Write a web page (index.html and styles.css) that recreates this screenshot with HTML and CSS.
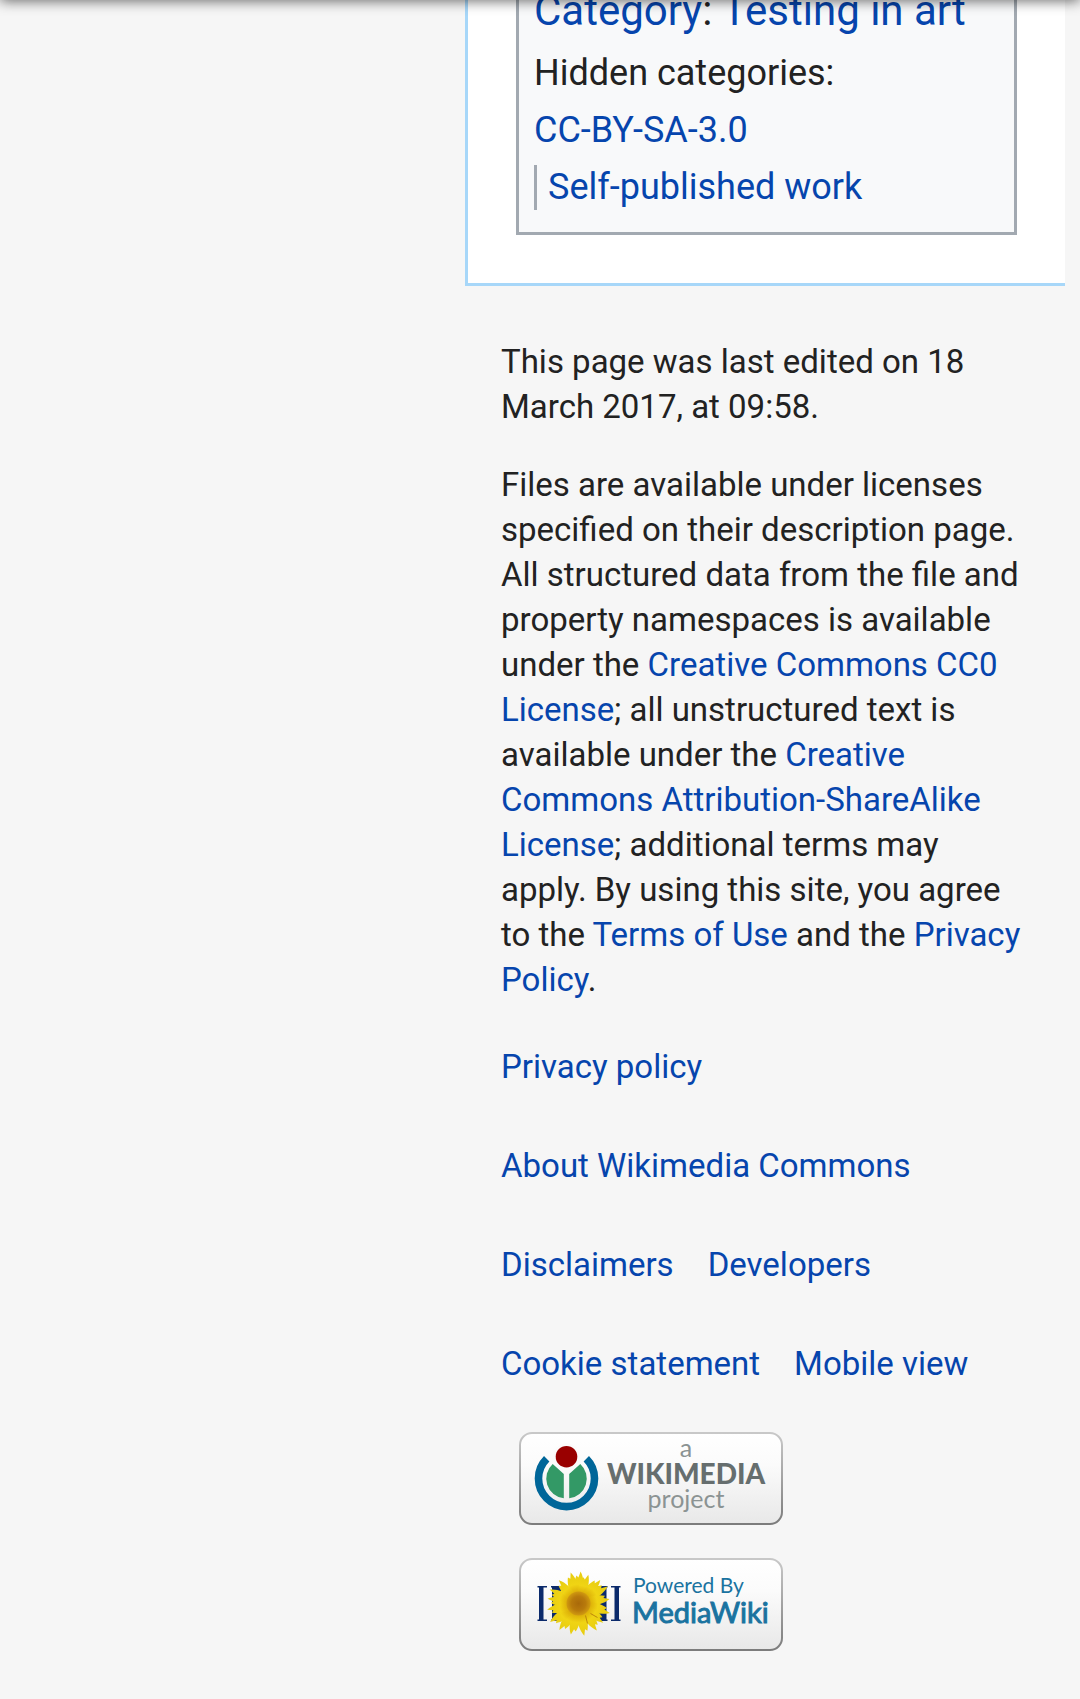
FILE: index.html
```html
<!DOCTYPE html>
<html lang="en">
<head>
<meta charset="utf-8">
<meta name="viewport" content="width=device-width, initial-scale=1">
<title>Testing in art - Wikimedia Commons</title>
<link rel="stylesheet" href="styles.css">
</head>
<body>
<div class="top-shadow"></div>
<main class="content">
  <div class="catlinks">
    <div class="cat-normal"><a href="#">Category</a>: <a href="#">Testing in art</a></div>
    <div class="cat-hidden">Hidden categories:
      <ul>
        <li><a href="#">CC-BY-SA-3.0</a></li>
        <li><a href="#">Self-published work</a></li>
      </ul>
    </div>
  </div>
</main>
<footer class="footer">
  <p>This page was last edited on 18 March 2017, at 09:58.</p>
  <p>Files are available under licenses specified on their description page. All structured data from the file and property namespaces is available under the <a href="#">Creative Commons CC0 License</a>; all unstructured text is available under the <a href="#">Creative Commons Attribution-ShareAlike License</a>; additional terms may apply. By using this site, you agree to the <a href="#">Terms of Use</a> and the <a href="#">Privacy Policy</a>.</p>
  <ul class="places">
    <li><a href="#">Privacy policy</a></li>
    <li><a href="#">About Wikimedia Commons</a></li>
    <li><a href="#">Disclaimers</a></li>
    <li><a href="#">Developers</a></li>
    <li><a href="#">Cookie statement</a></li>
    <li><a href="#">Mobile view</a></li>
  </ul>
  <ul class="badges">
    <li><a class="badge" href="#">
      <svg width="264" height="93" viewBox="0 0 264 93">
        <defs>
          <linearGradient id="face" x1="0" y1="0" x2="0" y2="1"><stop offset="0" stop-color="#fff"/><stop offset=".35" stop-color="#fbfbfb"/><stop offset="1" stop-color="#e8e8e8"/></linearGradient>
          <linearGradient id="edge" x1="0" y1="0" x2="0" y2="1"><stop offset="0" stop-color="#c8c8c8"/><stop offset="1" stop-color="#7c7c7c"/></linearGradient>
        </defs>
        <rect x="1" y="1" width="262" height="91" rx="12" fill="url(#face)" stroke="url(#edge)" stroke-width="2"/>
        <path d="M27.7 26.8A28 28 0 1 0 67.3 26.8" fill="none" stroke="#069" stroke-width="7.6"/>
        <path d="M33.7 32L44.8 42V66.3A19.8 19.8 0 0 1 33.7 32zM61.3 32L50.2 42V66.3A19.8 19.8 0 0 0 61.3 32z" fill="#396"/>
        <circle cx="47.5" cy="24.7" r="13.4" fill="#fbfbfb"/>
        <circle cx="47.5" cy="24.7" r="10.8" fill="#900"/>
        <text class="wm-small" x="167" y="25">a</text>
        <text class="wm-name" x="167" y="52">WIKIMEDIA</text>
        <text class="wm-small" x="167" y="76">project</text>
      </svg>
    </a></li>
    <li><a class="badge" href="#">
      <svg width="264" height="93" viewBox="0 0 264 93">
        <defs>
          <path id="petal" d="M-4-9C-6-17-5-23-3-28L-1-26L1-32C5-25 5-17 4-9z"/>
          <radialGradient id="disk"><stop offset="0" stop-color="#a9690a"/><stop offset=".6" stop-color="#b87a0c"/><stop offset="1" stop-color="#d09a10"/></radialGradient>
          <radialGradient id="yellow" gradientUnits="userSpaceOnUse" cx="0" cy="0" r="32"><stop offset=".35" stop-color="#dcae08"/><stop offset=".6" stop-color="#f0d414"/><stop offset="1" stop-color="#e6cc10"/></radialGradient>
        </defs>
        <rect x="1" y="1" width="262" height="91" rx="12" fill="url(#face)" stroke="url(#edge)" stroke-width="2"/>
        <path d="M18.5 28H28V29.500H24.500V61.500H28V63H18.500V61.500H20V29.500H18.500zM101.500 28H92V29.500H95.500V61.500H92V63H101.500V61.500H100V29.500H101.500zM32 28H42V63H32V61.500H33V29.500H32zM78 28H88.500V29.500H87.500V61.500H88.500V63H78z" fill="#0b2a6b"/>
        <g transform="translate(59.500 45.500)">
          <circle r="19" fill="#dfbd0c"/>
          <g fill="url(#yellow)">
            <use href="#petal" transform="rotate(-16)"/>
            <use href="#petal" transform="rotate(2)"/>
            <use href="#petal" transform="rotate(17) scale(.95)"/>
            <use href="#petal" transform="rotate(41)"/>
            <use href="#petal" transform="rotate(58) scale(1.05)"/>
            <use href="#petal" transform="rotate(80) scale(.98)"/>
            <use href="#petal" transform="rotate(105) scale(1.02)"/>
            <use href="#petal" transform="rotate(126) scale(.98)"/>
            <use href="#petal" transform="rotate(144) scale(1.02)"/>
            <use href="#petal" transform="rotate(168) scale(1.02)"/>
            <use href="#petal" transform="rotate(192)"/>
            <use href="#petal" transform="rotate(214) scale(1.02)"/>
            <use href="#petal" transform="rotate(235) scale(1.06)"/>
            <use href="#petal" transform="rotate(257)"/>
            <use href="#petal" transform="rotate(277) scale(.98)"/>
            <use href="#petal" transform="rotate(294)"/>
            <use href="#petal" transform="rotate(318) scale(.95)"/>
          </g>
          <path d="M12 10L19 14M7 12L9 20" stroke="#a9690a" opacity=".7"/>
          <circle r="12" fill="url(#disk)"/>
        </g>
        <text class="mw-small" x="114" y="35">Powered By</text>
        <text class="mw-name" x="113" y="65">MediaWiki</text>
      </svg>
    </a></li>
  </ul>
</footer>
</body>
</html>
```
FILE: styles.css
```css
* { box-sizing: border-box; }

body {
  margin: 0;
  background: #f6f6f6;
  color: #222;
  font-family: Roboto, "Liberation Sans", sans-serif;
  overflow-x: hidden;
}

a { color: #0645ad; text-decoration: none; }
ul { list-style: none; margin: 0; padding: 0; }

.top-shadow {
  position: fixed;
  top: -12px;
  left: 0;
  right: 0;
  height: 12px;
  box-shadow: 0 0 14px rgba(0, 0, 0, .7);
}

/* The end of the article, already scrolled under the top edge */
.content {
  margin: -20px 15px 0 465px;
  padding: 0 48px 48px;
  background: #fff;
  border: 3px solid #a7d7f9;
  border-width: 0 0 3px 3px;
}

.catlinks {
  padding: 0 15px 16px;
  background: #f8f9fa;
  border: 3px solid #a2a9b1;
  border-top: 0;
}

.cat-normal { font-size: 42px; line-height: 62px; }
.cat-hidden { margin-top: 3px; font-size: 36px; line-height: 57px; }
.cat-hidden li { display: flex; align-items: center; min-height: 57px; }
.cat-hidden li + li a {
  border-left: 3px solid #a2a9b1;
  padding-left: 11px;
  line-height: 45px;
}

.footer {
  margin: 0 51px 0 501px;
  padding: 53px 0 48px;
  font-size: 33px;
  line-height: 45px;
}

.footer p { margin: 0 0 33px; }

.places {
  display: flex;
  flex-wrap: wrap;
  gap: 54px 34px;
  padding-top: 9px;
}

.badges {
  display: flex;
  flex-direction: column;
  gap: 33px;
  padding: 46px 18px 0;
}

.badge { display: block; }
.badge svg { display: block; }

.wm-small, .wm-name { font-family: Lato, sans-serif; text-anchor: middle; }
.wm-small { font-size: 25px; fill: #8b9393; }
.wm-name { font-size: 28px; font-weight: 900; fill: #666e6e; }
.mw-small, .mw-name { font-family: Lato, sans-serif; fill: #1a73a0; }
.mw-small { font-size: 21px; }
.mw-name { font-size: 29px; stroke: #1a73a0; stroke-width: 1px; }
```
